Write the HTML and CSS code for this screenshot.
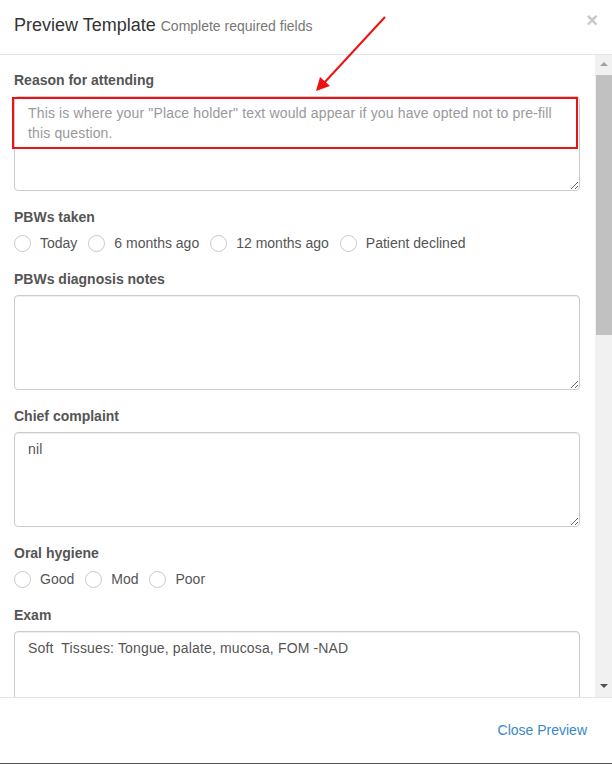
FILE: index.html
```html
<!DOCTYPE html>
<html lang="en">
<head>
    <meta charset="UTF-8">
    <meta name="viewport" content="width=device-width, initial-scale=1.0">
    <title>Preview Template</title>
    <link rel="stylesheet" href="styles.css">
</head>
<body>
    <div class="modal">
        <div class="modal-header">
            <h4 class="modal-title">Preview Template <small>Complete required fields</small></h4>
            <span class="close">&times;</span>
        </div>

        <div class="modal-body">
            <div class="form-area">
                <div class="form-group">
                    <label class="field-label">Reason for attending</label>
                    <div class="field-wrap">
                        <textarea class="form-control" placeholder="This is where your &quot;Place holder&quot; text would appear if you have opted not to pre-fill this question."></textarea>
                        <div class="highlight-box"></div>
                    </div>
                </div>

                <div class="form-group">
                    <label class="field-label">PBWs taken</label>
                    <div class="radio-row">
                        <label class="radio-option"><span class="radio-circle"></span>Today</label>
                        <label class="radio-option"><span class="radio-circle"></span>6 months ago</label>
                        <label class="radio-option"><span class="radio-circle"></span>12 months ago</label>
                        <label class="radio-option"><span class="radio-circle"></span>Patient declined</label>
                    </div>
                </div>

                <div class="form-group">
                    <label class="field-label">PBWs diagnosis notes</label>
                    <textarea class="form-control"></textarea>
                </div>

                <div class="form-group">
                    <label class="field-label">Chief complaint</label>
                    <textarea class="form-control">nil</textarea>
                </div>

                <div class="form-group">
                    <label class="field-label">Oral hygiene</label>
                    <div class="radio-row">
                        <label class="radio-option"><span class="radio-circle"></span>Good</label>
                        <label class="radio-option"><span class="radio-circle"></span>Mod</label>
                        <label class="radio-option"><span class="radio-circle"></span>Poor</label>
                    </div>
                </div>

                <div class="form-group">
                    <label class="field-label">Exam</label>
                    <textarea class="form-control">Soft  Tissues: Tongue, palate, mucosa, FOM -NAD</textarea>
                </div>
            </div>

            <div class="scrollbar">
                <div class="scroll-btn"><span class="tri-up"></span></div>
                <div class="scroll-track">
                    <div class="scroll-thumb"></div>
                </div>
                <div class="scroll-btn"><span class="tri-down"></span></div>
            </div>
        </div>

        <div class="modal-footer">
            <a class="close-link" href="#">Close Preview</a>
        </div>

        <svg class="annotation-arrow" width="612" height="120" viewBox="0 0 612 120">
            <line x1="385" y1="17" x2="324" y2="83" stroke="#ee1111" stroke-width="2"/>
            <polygon points="316,91 320,77 330,86" fill="#ee1111"/>
        </svg>
    </div>
</body>
</html>
```

FILE: styles.css
```css
* {
    box-sizing: border-box;
}
body {
    margin: 0;
    font-family: "Liberation Sans", Arial, sans-serif;
    font-size: 14px;
    color: #555;
    background-color: #fff;
}
.modal {
    position: relative;
    width: 612px;
    height: 764px;
    display: flex;
    flex-direction: column;
    border-bottom: 1px solid #555;
    overflow: hidden;
}
.modal-header {
    height: 55px;
    flex-shrink: 0;
    display: flex;
    justify-content: space-between;
    align-items: flex-start;
    padding: 14px 14px 0 14px;
    border-bottom: 1px solid #e5e5e5;
}
.modal-title {
    margin: 0;
    font-size: 18px;
    font-weight: normal;
    line-height: 22px;
    color: #333;
}
.modal-title small {
    font-size: 14px;
    color: #777;
}
.close {
    font-size: 20px;
    line-height: 12px;
    font-weight: bold;
    color: #c8c8c8;
}
.modal-body {
    height: 642px;
    flex-shrink: 0;
    display: flex;
}
.form-area {
    flex: 1;
    overflow: hidden;
    padding: 16px 15px 0 14px;
}
.form-group {
    margin-bottom: 17px;
}
.field-label {
    display: block;
    font-size: 14px;
    font-weight: bold;
    line-height: 18px;
    color: #555;
    margin-bottom: 7px;
}
.field-wrap {
    position: relative;
}
.form-control {
    display: block;
    width: 566px;
    height: 95px;
    padding: 6px 13px;
    border: 1px solid #ccc;
    border-radius: 4px;
    box-shadow: inset 0 1px 1px rgba(0, 0, 0, 0.075);
    font-family: "Liberation Sans", Arial, sans-serif;
    font-size: 14px;
    line-height: 20px;
    letter-spacing: 0.15px;
    color: #555;
    background-color: #fff;
    resize: vertical;
    margin: 0;
}
.form-control::placeholder {
    color: #999;
}
.highlight-box {
    position: absolute;
    left: -2px;
    top: 1px;
    width: 566px;
    height: 52px;
    border: 2px solid #ee1111;
}
.radio-row {
    display: flex;
    align-items: center;
    height: 20px;
    margin-top: 1px;
}
.radio-option {
    display: flex;
    align-items: center;
    gap: 9px;
    margin-right: 11px;
    font-size: 14px;
    color: #555;
}
.radio-circle {
    width: 17px;
    height: 17px;
    border: 1px solid #c8c8c8;
    border-radius: 50%;
    background-color: #fff;
}
.scrollbar {
    width: 17px;
    flex-shrink: 0;
    background-color: #f1f1f1;
    display: flex;
    flex-direction: column;
}
.scroll-btn {
    height: 17px;
    display: flex;
    align-items: center;
    justify-content: center;
}
.scroll-btn:last-child {
    margin-bottom: 3px;
}
.tri-up {
    width: 0;
    height: 0;
    border-left: 4px solid transparent;
    border-right: 4px solid transparent;
    border-bottom: 4px solid #a3a3a3;
}
.tri-down {
    width: 0;
    height: 0;
    border-left: 4px solid transparent;
    border-right: 4px solid transparent;
    border-top: 4px solid #505050;
}
.scroll-track {
    flex: 1;
    padding: 3px 0 0 1px;
}
.scroll-thumb {
    height: 260px;
    background-color: #c1c1c1;
}
.modal-footer {
    flex: 1;
    display: flex;
    justify-content: flex-end;
    align-items: center;
    padding: 0 25px 0 15px;
    border-top: 1px solid #e5e5e5;
}
.close-link {
    font-size: 14px;
    color: #3a87c9;
    text-decoration: none;
    margin-bottom: 1px;
}
.annotation-arrow {
    position: absolute;
    left: 0;
    top: 0;
    pointer-events: none;
}
```
